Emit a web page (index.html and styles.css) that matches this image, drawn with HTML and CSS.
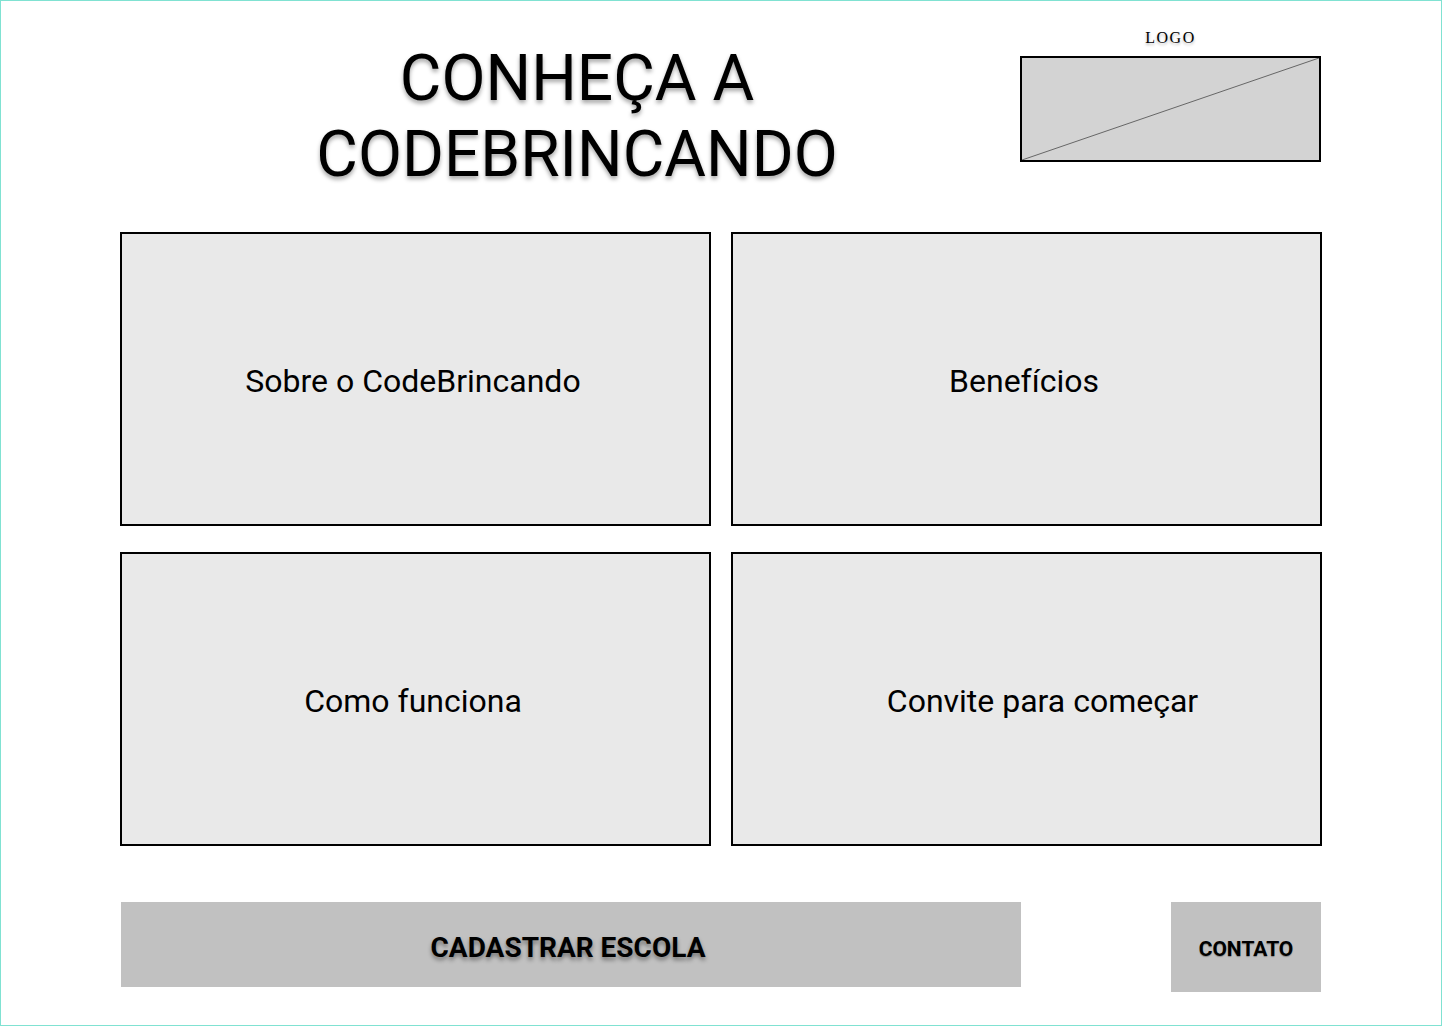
FILE: index.html
```html
<!DOCTYPE html>
<html lang="pt-BR">
<head>
	<meta charset="UTF-8">
	<title>Conheça a CodeBrincando</title>
	<link rel="stylesheet" href="styles.css">
</head>
<body>
	<div class="page">
		<div class="header">
			<h1 class="title">CONHEÇA A<br>CODEBRINCANDO</h1>
			<div class="logo">
				<div class="logoLabel">LOGO</div>
				<div class="logoBox">
					<svg viewBox="0 0 100 100" preserveAspectRatio="none">
						<line x1="0" y1="100" x2="100" y2="0" stroke="#666" stroke-width="1" vector-effect="non-scaling-stroke"/>
					</svg>
				</div>
			</div>
		</div>

		<div class="cards">
			<div class="card">Sobre o CodeBrincando</div>
			<div class="card">Benefícios</div>
			<div class="card">Como funciona</div>
			<div class="card card-wide">Convite para começar</div>
		</div>

		<div class="actions">
			<div class="btnMain">CADASTRAR ESCOLA</div>
			<div class="btnContact">CONTATO</div>
		</div>
	</div>
</body>
</html>
```

FILE: styles.css
```css
*{
	margin: 0;
	padding: 0;
	box-sizing: border-box;
}
body{
	background-color: #fff;
	font-family: Roboto, "Liberation Sans", sans-serif;
	color: #000;
}
.page{
	width: 1442px;
	height: 1026px;
	border: 1px solid #80e2d2;
	padding-left: 119px;
}

/* cabeçalho */
.header{
	display: flex;
	align-items: flex-start;
	width: 1202px;
}
.title{
	width: 900px;
	padding-left: 14px;
	margin-top: 40px;
	font-size: 64px;
	font-weight: 400;
	line-height: 76px;
	text-align: center;
	text-shadow: 0 3px 4px rgba(0,0,0,0.35);
}
.logo{
	width: 301px;
	margin-top: 27px;
}
.logoLabel{
	font-family: "Liberation Serif", serif;
	font-size: 16px;
	line-height: 20px;
	letter-spacing: 1.5px;
	text-align: center;
	text-shadow: 0 2px 3px rgba(0,0,0,0.3);
}
.logoBox{
	margin-top: 8px;
	height: 106px;
	border: 2px solid #000;
	background-color: #d3d3d3;
}
.logoBox svg{
	display: block;
	width: 100%;
	height: 100%;
}

/* cartões */
.cards{
	display: grid;
	grid-template-columns: 591px 591px;
	grid-auto-rows: 294px;
	column-gap: 20px;
	row-gap: 26px;
	margin-top: 39px;
}
.card{
	display: flex;
	align-items: center;
	justify-content: center;
	padding: 4px 5px 0 0;
	border: 2px solid #000;
	background-color: #e9e9e9;
	font-size: 32px;
}
.card-wide{
	padding-left: 36px;
	padding-right: 4px;
}

/* botões */
.actions{
	display: flex;
	justify-content: space-between;
	align-items: flex-start;
	width: 1202px;
	padding-left: 1px;
	padding-right: 1px;
	margin-top: 56px;
}
.btnMain{
	display: flex;
	align-items: center;
	justify-content: center;
	width: 900px;
	height: 85px;
	padding-top: 5px;
	padding-right: 6px;
	background-color: #c1c1c1;
	font-size: 28px;
	font-weight: 700;
	text-shadow: 0 3px 4px rgba(0,0,0,0.4);
}
.btnContact{
	display: flex;
	align-items: center;
	justify-content: center;
	width: 150px;
	height: 90px;
	padding-top: 3px;
	background-color: #c1c1c1;
	font-size: 21px;
	font-weight: 700;
	text-shadow: 0 1px 1px rgba(0,0,0,0.3);
}
```
